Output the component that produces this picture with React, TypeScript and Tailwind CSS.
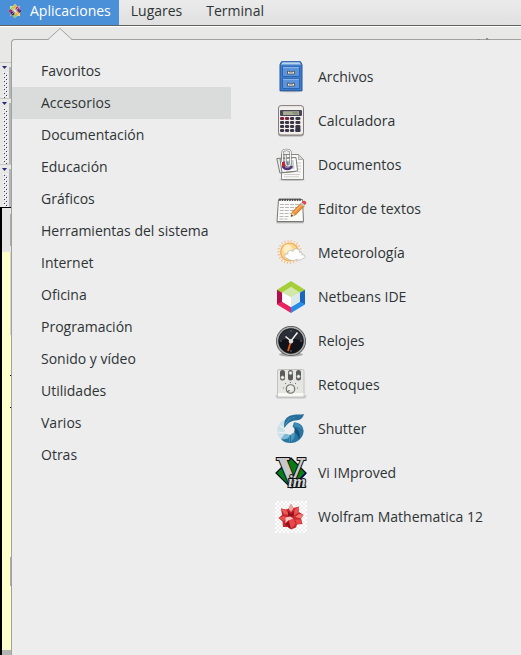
import type { ReactNode } from 'react';

const categories = [
  'Favoritos',
  'Accesorios',
  'Documentación',
  'Educación',
  'Gráficos',
  'Herramientas del sistema',
  'Internet',
  'Oficina',
  'Programación',
  'Sonido y vídeo',
  'Utilidades',
  'Varios',
  'Otras',
];

function Icon({ children }: { children: ReactNode }) {
  return (
    <svg aria-hidden="true" viewBox="0 0 32 32" className="size-8 shrink-0 overflow-visible">
      {children}
    </svg>
  );
}

function FilesIcon() {
  return (
    <Icon>
      <ellipse cx="16" cy="30" rx="12" ry="1.3" fill="#b9b9b9" />
      <path d="M6.5.7h19l1.500 3v26h-22v-26z" fill="#3f7cc9" stroke="#2157a0" />
      <path d="M7.500 1.3h17l1.4 2.2H6.100z" fill="#b5d2ee" />
      <path d="M7.5 5.5h17v10h-17zM7.5 17.5h17v10h-17z" fill="#5c94dc" stroke="#2b65b2" />
      <path d="M8 6.4h16M8 18.4h16" stroke="#8bb6ea" />
      {[10, 22].map((y) => (
        <path key={y} d={`M12.500 ${y}h1.500v1h4v-1h1.500v3h-7z`} fill="#f6f4e9" stroke="#51525a" strokeWidth=".9" />
      ))}
    </Icon>
  );
}

function CalculatorIcon() {
  return (
    <Icon>
      <rect x="3" y="1.5" width="26" height="30" rx="3" fill="#aaa6a3" />
      <rect x="3.5" y=".6" width="25" height="29.4" rx="2.6" fill="#f1efeb" stroke="#82797a" />
      <rect x="5" y="5" width="22" height="6" rx="1" fill="#48455c" />
      <rect x="8" y="6.2" width="16" height="3.8" fill="#a7ad91" />
      <path d="M17.5 8h1.5M20 7v2.5M22 7v2.5" stroke="#6e735f" />
      {[12, 16, 20, 24].map((y) =>
        [5, 10, 15, 20.4].map((x) => (
          <rect
            key={`${x}-${y}`}
            x={x}
            y={y}
            width={x > 20 ? 5 : 4.2}
            height={x > 20 && y === 20 ? 7 : 3}
            rx="1.3"
            fill={y === 12 && x < 15 ? '#7c2439' : '#393546'}
          />
        )),
      )}
    </Icon>
  );
}

function DocumentsIcon() {
  return (
    <Icon>
      <ellipse cx="17" cy="30.8" rx="13" ry="1.2" fill="#c3c3c3" />
      <path d="M6.5 5.5h17l5 5v20h-22z" fill="#f8f8f7" stroke="#868884" />
      <path d="M23.5 5.5v5h5z" fill="#d5d6d4" stroke="#9b9d99" strokeWidth=".7" />
      <path d="M9 25.5h16M9 27.8h15M22 14h4M22 17h4M22 20h4M22 22.8h4" stroke="#cdcecb" />
      <path d="M1.8 9.5l17-1 1.6 14-15.5 1.5z" fill="#ededeb" stroke="#7b7d79" />
      <path d="M5 10l16-1.5 1.5 13.5L7 23.5z" fill="#fff" stroke="#7b7d79" />
      <path d="M7.5 12l11-1 1 8.8-10.5 1z" fill="#c3ced3" />
      <path d="M7 12.500h3.500v6H7z" fill="#c9202b" />
      <path d="M11 12.5h2.5v6H11z" fill="#5b82c4" />
      <path d="M14 12h2v6h-2z" fill="#e5b73a" />
      <path d="M8 17.500c2 3.500 7 3.500 9-.5" stroke="#52347d" strokeWidth="2.500" fill="none" />
      <path d="M7.5 13V3.5c0-3.5 8-3.5 8 0V14c0 4-4.8 4-4.8 0V6" fill="none" stroke="#747672" strokeWidth="2.2" />
      <path d="M7.5 13V3.5c0-3.5 8-3.5 8 0V14c0 4-4.8 4-4.8 0V6" fill="none" stroke="#f4f4f2" strokeWidth="1.1" />
    </Icon>
  );
}

function TextEditorIcon() {
  return (
    <Icon>
      <path d="M1.5 28.8h27v1.5h-27z" fill="#b1b2af" />
      <path d="M3.5 6.5h24l1 22H2z" fill="#fbfbfa" stroke="#777974" />
      <path d="M5 11.5h20M5 14.5h18M4.8 17.5h14M4.6 20.5h12M4.5 23.5h10M4.5 26h8" stroke="#b8b9b6" strokeDasharray="4 1" />
      <path d="M5 8V5.5M7.5 8V5.5M10 8V5.5M12.5 8V5.5M15 8V5.5M17.5 8V5.5M20 8V5.5M22.5 8V5.5M25 8V5.5" stroke="#434541" strokeWidth="1.5" />
      <path d="M4 5.5h22" stroke="#aaa" strokeWidth="1" />
      <path d="M16 23.5l1.3-4.5 9-9 3 3-9 9z" fill="#ef9130" stroke="#a6601c" strokeWidth=".7" />
      <path d="M19 19.5l8-8" stroke="#ffc578" />
      <path d="M16 23.5l1.2-4 2.8 2.8z" fill="#f0d6a8" />
      <path d="M16 23.5l.6-2 1.4 1.3z" fill="#252525" />
      <path d="M25.3 10.5l1.6-1.5 3 3-1.5 1.5z" fill="#c8cbcc" />
      <path d="M26.8 9.2l1.5-1.2c1.4-1 3.8 1.3 2.8 2.8l-1.3 1.3z" fill="#df434c" />
    </Icon>
  );
}

function WeatherIcon() {
  return (
    <Icon>
      <circle cx="14.5" cy="15" r="11" fill="none" stroke="#f6c07c" strokeWidth="2.5" strokeDasharray="1 2.1" />
      <circle cx="14.5" cy="15" r="9.5" fill="#f3ad4f" />
      <circle cx="14.5" cy="15" r="8.2" fill="#fdd68f" />
      <circle cx="12.5" cy="12" r="4.5" fill="#ffedc6" />
      <path
        d="M12.5 21.5c-4-.5-3.5-4.800.2-4.600-.4-3.500 3.400-4.600 5-2.400 1.500-4.400 7.300-3.200 7 .9 3.100-.3 2.800 1.900 2 2.300 4-.2 5 3.400 1 3.700-1 2-4.500 2.300-6 .9-2.500 2-6.500 1.500-9.200-.8z"
        fill="#fdfdfd"
        stroke="#b6b8b9"
        strokeWidth=".8"
      />
    </Icon>
  );
}

function NetbeansIcon() {
  return (
    <Icon>
      <path d="M2 8.800L16 0l14 8.800-5.200 3L16 6l-8.800 5.800z" fill="#a6ce39" />
      <path d="M2 8.800l5.200 3v9.400L2 23.500z" fill="#b20e4b" />
      <path d="M2 23.500l5.200-2.800L16 26v6z" fill="#ec215f" />
      <path d="M30 8.800l-5.200 3v9.400l5.200 2.300z" fill="#1b66bd" />
      <path d="M30 23.500l-5.200-2.800L16 26v6z" fill="#258de6" />
      <path d="M16 6l8.800 5.500L16 16.500l-8.800-5z" fill="#d2e7aa" />
      <path d="M7.200 11.500l8.800 5V26l-8.800-5.200z" fill="#fff" />
      <path d="M24.800 11.500l-8.800 5V26l8.800-5.200z" fill="#dbe9ed" />
    </Icon>
  );
}

function ClocksIcon() {
  return (
    <Icon>
      <ellipse cx="16" cy="29.5" rx="12" ry="2" fill="#aaa" />
      <circle cx="16" cy="16" r="15" fill="#4b4e4e" />
      <circle cx="16" cy="16" r="13.500" fill="none" stroke="#a9aba9" strokeWidth="1.600" />
      <circle cx="16" cy="16" r="12.500" fill="#12131a" />
      <path d="M4 16a12 12 0 0124 0c-7-3-16-3-24 0z" fill="#2b2d37" />
      <path d="M16 5v2M16 25v2M5 16h2M25 16h2" stroke="#666976" />
      <path d="M16 16l-3 10" stroke="#e75b13" strokeWidth="1.800" />
      <path d="M10.500 11.500L16 16l6.500-8.500" fill="none" stroke="#f3f3ef" strokeWidth="1.500" />
      <circle cx="16" cy="16.200" r="2.200" fill="#e1e1dd" />
    </Icon>
  );
}

function TweaksIcon() {
  return (
    <Icon>
      <path d="M0 26.500h32l-2 3H2z" fill="#c5c6c3" />
      <rect x="2.500" y=".5" width="26.500" height="27" rx="1.500" fill="#e5e6e2" stroke="#c2c3c0" />
      <path d="M3 24h25.500v3.500H3z" fill="#f8f8f5" />
      {[
        [7.5, 8.5],
        [15.5, 4],
        [23.5, 7.5],
      ].map(([x, y]) => (
        <g key={x}>
          <rect x={x - 2.5} y="1" width="5" height="10.500" rx="2.500" fill="#5a5c59" />
          <circle cx={x} cy={y} r="1.800" fill="#f0f0ee" stroke="#8a8c88" strokeWidth=".6" />
        </g>
      ))}
      <circle cx="15.500" cy="20" r="4.300" fill="#d8d9d5" stroke="#6b6d69" strokeWidth="1.100" />
      <circle cx="15.500" cy="19.500" r="3" fill="#ecece8" />
      <path d="M12.500 23l2-2" stroke="#333" />
      <path d="M8 19h1M22 19h1M10 14.500h1M20 14.500h1M15 13.500h1" stroke="#777" />
    </Icon>
  );
}

function ShutterIcon() {
  return (
    <Icon>
      <path d="M11 6C5 8 1 14 2.500 20c.5 4 3 6 6 7 0-3 0-5 2-7-1.500-4-2-9 .5-14z" fill="#cbe0e9" />
      <path d="M4 12l6 4M2.500 19l8 1" stroke="#edf5f8" />
      <path d="M9.500 15C8 8 11 3 18 2c4-1 7 0 11-1-1 3-2 5-5 6-3 .5-5 0-7.500 1.500-3 1-5 3.500-7 6.500z" fill="#296f9c" />
      <path d="M10 13c1-6 5-9 11-9-4 1-8 3-11 9z" fill="#5ba6cb" />
      <path d="M19 9.500c5-.5 10 3 9.500 9.500-.5 6-6 11-13 11-4 0-7-1-9.500-4 2-1 2.500-4 4.500-5 4 2 8 1.500 9-2 .7-2.500 0-4-2-5.500 1-1.500.5-2.500 1.500-4z" fill="#2a76a3" />
      <path d="M19 9.500c4 .5 7 2.500 9.500 8.500-3-2-6-3-9-3z" fill="#3c8db7" />
      <path d="M20 15c4 2 6 6 4 11-1-4-2-6-4.500-7z" fill="#164f77" />
      <path d="M19.500 19c1 4-1 8-5 11-1-3 0-5 .5-8z" fill="#4c9bc3" />
      <path d="M15 22c-1 4-4 5-9 4 2-1 2.500-4 4.500-5z" fill="#7bb9d5" />
      <path d="M11 9l7-5M20 14.500c3 0 6 1 8 4M19.500 19c3 2 4 4 4.500 7M15 22c1 3 1 5 0 8" fill="none" stroke="#174d70" strokeWidth=".6" />
    </Icon>
  );
}

function VimIcon() {
  return (
    <Icon>
      <path d="M16 1l15 15-15 15L1 16z" fill="#087d13" stroke="#050b25" strokeWidth="1.200" />
      <path d="M17 31l14-15" stroke="#00006d" strokeWidth="1.500" />
      <text
        x="2"
        y="27"
        fontFamily="DejaVu Serif, serif"
        fontWeight="700"
        fontSize="36"
        fill="#c8c8c8"
        stroke="#111"
        strokeWidth="2"
        paintOrder="stroke"
      >
        V
        <tspan x="13" y="30" fontFamily="Liberation Serif, serif" fontStyle="italic" fontSize="17" fill="#dadada">
          im
        </tspan>
      </text>
    </Icon>
  );
}

function MathematicaIcon() {
  return (
    <Icon>
      <defs>
        <pattern id="checker" width="4" height="4" patternUnits="userSpaceOnUse">
          <path d="M0 0h4v4H0z" fill="#fff" />
          <path d="M0 0h2v2H0zM2 2h2v2H2z" fill="#ededed" />
        </pattern>
      </defs>
      <path d="M0 0h32v32H0z" fill="url(#checker)" />
      <path d="M16 3l2.500 4L24 5.500v5.500l4.500 3L26 17.500l1.500 5.500-5.500.5-1 3-5 2-3.500-2.500L8 26l-.5-5.500L3.500 17 7 14 6 7.500l5 1 2.500-1z" fill="#c9262d" />
      <path d="M16 3l2.500 4.500L16 11l-2.500-3.500z" fill="#eda9a6" />
      <path d="M6 7.500l5.500 2 2.500 4.500-5-1z" fill="#ec5a54" />
      <path d="M24 5.500v6l-5 3 .5-6z" fill="#e95450" />
      <path d="M28.500 14L26 17.500 20 16l4-3z" fill="#ef7a73" />
      <path d="M3.500 17l5.500-2 3 2-3 3z" fill="#e9504e" />
      <path d="M13 10l3 3 3-3-.5 5-3 1-2.500-1z" fill="#8f1220" />
      <path d="M10.500 16.500l5-1 3 2.500-5 1.500-3 3z" fill="#fbc4c0" />
      <path d="M20 18.500l5.500 0 1.500 4-5 .5z" fill="#e6494a" />
      <path d="M13.500 19.500l5-1.500 2 5-4.500 5z" fill="#e8484a" />
      <path d="M10 23l3.500-3.500 2.500 8.500-3.500-2.500z" fill="#98101f" />
    </Icon>
  );
}

const apps: { name: string; icon: ReactNode }[] = [
  { name: 'Archivos', icon: <FilesIcon /> },
  { name: 'Calculadora', icon: <CalculatorIcon /> },
  { name: 'Documentos', icon: <DocumentsIcon /> },
  { name: 'Editor de textos', icon: <TextEditorIcon /> },
  { name: 'Meteorología', icon: <WeatherIcon /> },
  { name: 'Netbeans IDE', icon: <NetbeansIcon /> },
  { name: 'Relojes', icon: <ClocksIcon /> },
  { name: 'Retoques', icon: <TweaksIcon /> },
  { name: 'Shutter', icon: <ShutterIcon /> },
  { name: 'Vi IMproved', icon: <VimIcon /> },
  { name: 'Wolfram Mathematica 12', icon: <MathematicaIcon /> },
];

function CentosLogo() {
  return (
    <svg aria-hidden="true" viewBox="0 0 14 14" className="size-3.5 shrink-0">
      <path d="M7 0l2 2h3v3l2 2-2 2v3H9l-2 2-2-2H2V9L0 7l2-2V2h3z" fill="#e9e5dc" />
      <path d="M2.500 2.500h4v4h-4z" fill="#a8c85b" />
      <path d="M7.500 2.500h4v4h-4z" fill="#993b85" />
      <path d="M2.500 7.500h4v4h-4z" fill="#3b2669" />
      <path d="M7.500 7.500h4v4h-4z" fill="#efac3c" />
      <path d="M7 0l2 2.200L7 5 5 2.200z" fill="#e2bb50" />
      <path d="M0 7l2.200-2L5 7 2.200 9z" fill="#94347e" />
      <path d="M14 7l-2.200-2L9 7l2.800 2z" fill="#4a377b" />
      <path d="M7 14l-2-2.200L7 9l2 2.800z" fill="#9cc55a" />
      <path d="M3 3l8 8M11 3l-8 8" stroke="#f4eee6" strokeWidth=".5" />
    </svg>
  );
}

function ToolbarGrip({ id, className }: { id: string; className: string }) {
  return (
    <div className={`flex border-t border-[#c8c8c6] ${className}`}>
      <svg aria-hidden="true" className="h-full w-2 shrink-0">
        <defs>
          <pattern id={id} width="4" height="4" patternUnits="userSpaceOnUse">
            <path d="M2 0h1v1H2zM0 2h1v1H0z" fill="#34347e" />
            <path d="M3 1h1v1H3zM1 3h1v1H1z" fill="#fff" />
          </pattern>
        </defs>
        <path d="M2 3h5L4.500 6z" fill="#282878" />
        <rect x="3" y="9" width="5" height="100%" fill={`url(#${id})`} />
      </svg>
      <span className="ml-px mt-1 w-0.5 bg-[#b5b5b3]" />
    </div>
  );
}

function BackgroundWindow() {
  return (
    <div aria-hidden="true" className="flex w-[11px] shrink-0 flex-col overflow-hidden pt-[35px]">
      <ToolbarGrip id="grip-a" className="h-9" />
      <ToolbarGrip id="grip-b" className="h-[66px]" />
      <ToolbarGrip id="grip-c" className="h-[43px]" />
      <div className="flex grow flex-col border-l-2 border-t border-black">
        <div className="flex h-11 justify-end bg-[#e6e6e4] py-1.5">
          <span className="w-px bg-[#aaaaaa]" />
        </div>
        <div className="flex grow flex-col items-end bg-[#ffffcc]">
          <span className="h-[83px] w-px bg-[#d4d4d0]" />
          <span className="mt-10 h-px w-px bg-black" />
          <span className="mt-[31px] h-px w-px bg-black" />
          <span className="mt-[149px] h-[29px] w-px bg-[#aaaaaa]" />
        </div>
        <div className="h-[5px] bg-[#b4b4b2]" />
      </div>
    </div>
  );
}

export default function App() {
  return (
    <div className="flex min-h-screen flex-col bg-[#e8e8e6] font-['Open_Sans','Noto_Sans',sans-serif] text-sm text-[#2e3436]">
      <header className="border-b border-[#5f6261] bg-linear-to-b from-[#ebebeb] to-[#dfe0df]">
        <nav className="flex h-[25px] leading-[22px]">
          <button type="button" className="flex items-start gap-2 bg-[#4a90d9] px-2 text-white">
            <span className="pt-1">
              <CentosLogo />
            </span>
            Aplicaciones
          </button>
          <button type="button" className="flex items-start px-3">
            Lugares
          </button>
          <button type="button" className="flex items-start px-3">
            Terminal
          </button>
        </nav>
      </header>
      <div className="flex grow border-t border-white">
        <BackgroundWindow />
        <main className="relative mt-3 flex grow rounded-tl border-l border-t border-[#a0a1a0] bg-[#ededed] pt-[15px]">
          <svg aria-hidden="true" viewBox="0 0 24 12" className="absolute -top-3 left-9 h-3 w-6">
            <path d="M0 12L12 .5 24 12z" fill="#ededed" />
            <path d="M0 11.500L12 .5l12 11" fill="none" stroke="#a0a1a0" />
          </svg>
          <svg aria-hidden="true" viewBox="0 0 12 2" className="absolute -top-0.5 right-8 h-0.5 w-3">
            <path d="M0 1h3v1H0zM9 0h2v1h1v1H9z" fill="#8c8d8c" />
          </svg>
          <ul className="w-[219px] shrink-0">
            {categories.map((name) => (
              <li key={name}>
                <button
                  type="button"
                  className={`flex h-8 w-full items-center pl-[29px] text-left ${
                    name === 'Accesorios' ? 'bg-[#dadcdb]' : ''
                  }`}
                >
                  {name}
                </button>
              </li>
            ))}
          </ul>
          <ul className="ml-11 grow">
            {apps.map(({ name, icon }) => (
              <li key={name}>
                <button type="button" className="flex h-11 w-full items-center gap-[11px] text-left">
                  {icon}
                  {name}
                </button>
              </li>
            ))}
          </ul>
        </main>
      </div>
    </div>
  );
}
